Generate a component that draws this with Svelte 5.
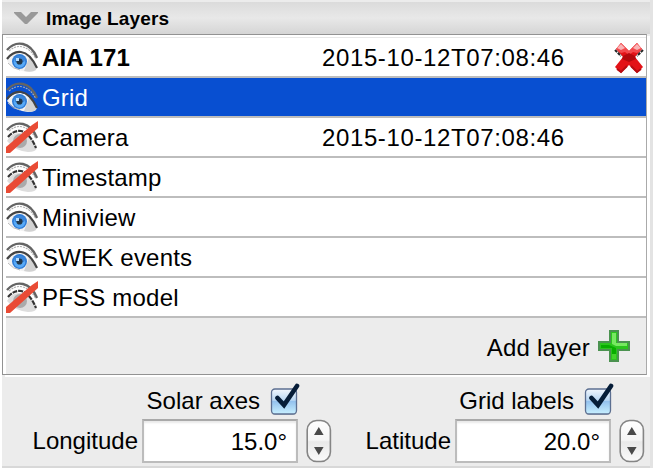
<script>
  const layers = [
    { name: 'AIA 171', visible: true, time: '2015-10-12T07:08:46', bold: true, removable: true, ls: 0.1 },
    { name: 'Grid', visible: true, selected: true, ls: 0.2 },
    { name: 'Camera', visible: false, time: '2015-10-12T07:08:46', ls: 0.2 },
    { name: 'Timestamp', visible: false, ls: 0.2 },
    { name: 'Miniview', visible: true, ls: 0.2 },
    { name: 'SWEK events', visible: true, ls: 0.2 },
    { name: 'PFSS model', visible: false, ls: 0.2 }
  ];
  const options = [
    { toggle: 'Solar axes', label: 'Longitude', value: '15.0°' },
    { toggle: 'Grid labels', label: 'Latitude', value: '20.0°' }
  ];
</script>

{#snippet eye(open)}
  <svg class="eye" width="32" height="32" viewBox="0 0 32 32">
    {#if open}
      <path d="M1 20Q6 11 15 12Q24 13 31 27Q30 31 22 31Q9 30 1 20Z" fill="#f2f2f2" />
      <path d="M23 17Q29 22 30 29Q26 32 18 30Z" fill="#d2d2d2" />
      <circle cx="13.5" cy="20.5" r="7.5" fill="#2f7cd6" />
      <circle cx="13.5" cy="21" r="5.8" fill="#58aaf7" />
      <path d="M8 17Q13 13 20 17L18 21H9Z" fill="#3b86da" />
      <circle cx="13.5" cy="20.5" r="3.1" fill="#22384c" />
      <rect x="10" y="17" width="3" height="3" fill="#b6dcff" />
      <path d="M1 18Q7 10 15 11Q24 12 31 27" fill="none" stroke="#444" stroke-width="2.2" />
      <path d="M2 22Q7 28 14 29" fill="none" stroke="#bbb" stroke-width="1" />
    {:else}
      <path d="M1 20Q6 11 15 12Q24 13 31 27Q30 31 22 31Q9 30 1 20Z" fill="#ddd" />
      <circle cx="14" cy="20" r="7" fill="#aaa" />
      <path d="M2 16Q8 9 15 10Q24 12 30 27" fill="none" stroke="#333" stroke-width="2.2" stroke-dasharray="5 1" />
    {/if}
    <path d="M1 9Q8 1 17 3Q26 5 31 17" fill="none" stroke="#646464" stroke-width="2.4" />
    <path d="M3 10Q10 4 17 6Q25 8 30 18" fill="none" stroke="#aaa" stroke-width="1.2" stroke-dasharray="2 1" />
    {#if !open}
      <path d="M0 26L26 4L32 0V7L4 32H0Z" fill="#e94b35" />
    {/if}
  </svg>
{/snippet}

<div class="window">
  <header>
    <svg width="24" height="13" viewBox="0 0 24 13"><path d="M0 0H7L12 5L17 0H24V1L13 12H11L0 1Z" fill="#999" /></svg>
    <span>Image Layers</span>
  </header>

  <section class="table">
    {#each layers as layer}
      <div class="row" class:selected={layer.selected}>
        {@render eye(layer.visible)}
        <span class="name" class:bold={layer.bold} style:letter-spacing="{layer.ls}px">{layer.name}</span>
        <span class="time">{layer.time ?? ''}</span>
        {#if layer.removable}
          <svg class="remove" width="30" height="32" viewBox="0 0 30 32">
            <path d="M2 7L7 1L15 9L23 1L28 7L21 15L29 25L23 31L15 23L7 31L1 25L9 15Z" fill="#e31217" />
            <path d="M2 7L7 1L15 9L23 1L28 7L23 11L19 10L15 13L11 10L7 11Z" fill="#f3484c" />
            <path d="M3 6L7 2L11 6L7 8ZM27 6L23 2L19 6L23 8Z" fill="#f9b4b6" />
            <path d="M1 8L7 14M29 8L23 14" stroke="#222" stroke-width="2" stroke-dasharray="3 1" />
            <path d="M9 14L15 11L21 14L22 17L15 20L8 17Z" fill="#b3090d" />
            <path d="M3 27L7 30L13 24M27 27L23 30L17 24" fill="none" stroke="#b60c12" stroke-width="2" />
          </svg>
        {/if}
      </div>
    {/each}
    <div class="add">
      <span>Add layer</span>
      <svg width="32" height="32" viewBox="0 0 32 32">
        <path d="M12 1H20V12H31V20H20V31H12V20H1V12H12Z" fill="#2bc51d" stroke="#4b9250" stroke-width="2" />
        <path d="M14 3H18V13H29V16H18L14 14Z" fill="#77e961" />
        <path d="M3 15H11L18 18V29H14V18H3Z" fill="#08ad00" />
        <path d="M14 24H18V29H14Z" fill="#43d22c" />
      </svg>
    </div>
  </section>

  <section class="options">
    {#each options as o, i}
      <div class="group" class:second={i === 1}>
        <div class="toggle">
          <span class="tl">{o.toggle}</span>
          <svg width="30" height="34" viewBox="0 0 30 34">
            <defs>
              <linearGradient id="box{i}" x2="0" y2="1">
                <stop stop-color="#f2f7fd" /><stop offset=".45" stop-color="#b9d7f3" />
                <stop offset=".5" stop-color="#94c2ee" /><stop offset="1" stop-color="#c8f0ff" />
              </linearGradient>
            </defs>
            <rect x="1" y="7" width="26" height="25" rx="4" fill="#aaa" opacity=".6" />
            <rect x="1.5" y="6" width="25" height="25" rx="3.5" fill="url(#box{i})" stroke="#5c6f91" stroke-width="1.3" />
            <path d="M7.5 15L14 22L27 3" fill="none" stroke="#061d38" stroke-width="4.6" stroke-linecap="round" stroke-linejoin="miter" />
          </svg>
        </div>
        <div class="field">
          <span class="fl">{o.label}</span>
          <span class="input">{o.value}</span>
          <svg width="26" height="44" viewBox="0 0 26 44">
            <defs>
              <linearGradient id="step{i}" x2="0" y2="1">
                <stop stop-color="#fff" /><stop offset=".48" stop-color="#f5f5f5" />
                <stop offset=".52" stop-color="#e9e9e9" /><stop offset="1" stop-color="#fafafa" />
              </linearGradient>
            </defs>
            <rect x="1.2" y="1.5" width="23.2" height="41" rx="9.5" fill="url(#step{i})" stroke="#858585" stroke-width="1.6" />
            <path d="M8 16L12.8 8L17.6 16ZM8 28H17.6L12.8 36Z" fill="#4a4a4a" />
          </svg>
        </div>
      </div>
    {/each}
  </section>
</div>

<style>
  :global(body) { background: #ececec; }
  .window {
    box-sizing: border-box; width: 653px; height: 468px; overflow: hidden;
    padding: 2px 3px 0 2px; background: #ececec;
    font: 24px 'Liberation Sans', Arial, sans-serif; color: #000;
    box-shadow: inset 2px 0 #fff, inset -3px 0 #e3e3e3;
  }
  svg { display: block; flex: none; }
  header {
    display: flex; align-items: center; height: 32px; padding-left: 12px;
    background: linear-gradient(#dbdbdb, #e8e8e8 50%, #d5d5d5);
    font-size: 19px; font-weight: bold; line-height: 32px;
  }
  header span { margin: 1px 0 0 8px; letter-spacing: 0.15px; }
  header svg { margin-top: 1px; }
  .table {
    box-sizing: border-box; width: 645px; height: 341px; margin-right: 3px;
    border: 1px solid #929292; border-right-color: #aaa; padding: 3px 0 0 3px;
    background: #fff; box-shadow: 3px 2px #fff, inset 3px 2px #fff, inset 0 3px #e8e8e8;
  }
  .row {
    box-sizing: border-box; display: flex; align-items: center; height: 40px;
    border-bottom: 2px solid #bdbdbd; background: #fff; line-height: 38px;
  }
  .selected { background: #084fd1; color: #fff; }
  .name { width: 280px; padding-left: 4px; box-sizing: border-box; margin-top: 2px; white-space: nowrap; }
  .bold { font-weight: bold; }
  .time { width: 288px; padding-left: 4px; margin-top: 2px; letter-spacing: 0.62px; box-sizing: border-box; }
  .remove { margin: 2px 0 0 8px; }
  .add {
    display: flex; align-items: center; justify-content: flex-end; height: 56px;
    padding-right: 16px; background: #ececec; gap: 8px;
  }
  .add span { letter-spacing: 0.2px; margin-top: 3px; }
  .options {
    box-sizing: border-box; display: flex; height: 91px; margin-top: 2px;
    border-bottom: 2px solid #d8d8d8; padding-top: 4px; background: #ececec;
  }
  .group { width: 330px; }
  .second { width: 313px; }
  .toggle { display: flex; align-items: center; justify-content: flex-end; height: 38px; padding-right: 32px; gap: 10px; }
  .second .toggle { padding-right: 31px; }
  .tl { margin-top: 2px; }
  .field { display: flex; align-items: center; justify-content: flex-end; height: 44px; }
  .fl { margin-right: 4px; }
  .input {
    box-sizing: border-box; width: 156px; height: 44px; margin-right: 8px;
    border: 2px solid #bcbcbc; border-top-color: #a9a9a9; padding-right: 9px;
    background: #fff; box-shadow: inset 0 2px 2px #e9e9e9; line-height: 41px; text-align: right;
  }
</style>
